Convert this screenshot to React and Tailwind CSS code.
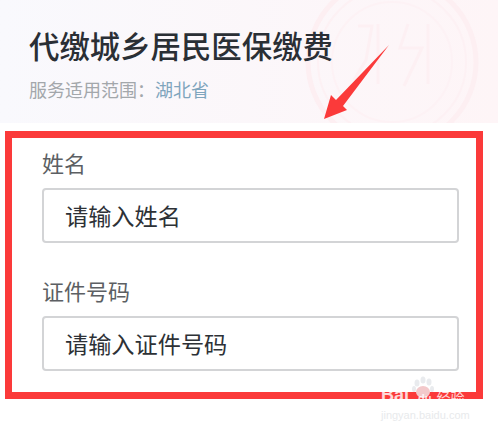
import React from "react";

function Seal() {
    return (
        <svg className="absolute right-0 top-0" width="198" height="123" viewBox="0 0 198 123" fill="none">
            <circle cx="92" cy="62" r="84" stroke="#fdeff2" strokeWidth="5" />
            <circle cx="92" cy="62" r="74" stroke="#fdf1f4" strokeWidth="2" />
            <circle cx="92" cy="62" r="60" stroke="#fdf2f5" strokeWidth="2" />
            <path d="M58 26 L72 26 L66 60 L54 80 M78 24 L78 84 M108 24 L100 48 L122 48 L104 86 M128 24 L128 84" stroke="#fdf0f3" strokeWidth="3" />
        </svg>
    );
}

function Arrow() {
    return (
        <svg className="absolute left-[320px] top-[40px]" width="76" height="84" viewBox="0 0 76 84">
            <path d="M69 5 L16 60 L11 55 L4 79 L27 70 L23 66 Z" fill="#fb3a3a" />
        </svg>
    );
}

function Watermark() {
    return (
        <div className="absolute left-[381px] top-[388px] w-[112px] text-white/80 leading-none pointer-events-none">
            <svg className="absolute left-[30px] top-[-12px]" width="24" height="24" viewBox="0 0 24 24" fill="#e9ebee">
                <ellipse cx="6" cy="7" rx="2.5" ry="3.5" />
                <ellipse cx="12" cy="4" rx="2.5" ry="3.5" />
                <ellipse cx="18" cy="6" rx="2.5" ry="3.5" />
                <ellipse cx="3" cy="13" rx="2" ry="3" />
                <ellipse cx="21" cy="13" rx="2" ry="3" />
                <ellipse cx="12" cy="16" rx="7" ry="6" fill="#f3c9cb" />
            </svg>
            <div className="relative flex items-end h-[16px] text-[18px] font-bold font-['Liberation_Sans',sans-serif]">
                <span>Bai</span>
                <span className="ml-[9px] text-[11px]">du</span>
                <span className="ml-[5px] text-[14px] font-normal font-['Noto_Sans_CJK_SC',sans-serif]">经验</span>
            </div>
            <div className="mt-[6px] text-[11px] text-[#e8eaec] font-['Liberation_Sans',sans-serif]">jingyan.baidu.com</div>
        </div>
    );
}

function Field({ label, placeholder }) {
    return (
        <div className="flex flex-col">
            <label className="text-[22px] leading-[28px] text-[#5c5f63]">{label}</label>
            <div className="mt-[12px] h-[55px] w-[417px] rounded-[4px] border-2 border-[#d3d4d6] bg-white flex items-center pl-[21px] text-[23.2px] text-[#2d3136]">
                {placeholder}
            </div>
        </div>
    );
}

export default function App() {
    return (
        <div className="relative h-[431px] w-[498px] overflow-hidden bg-white font-['Noto_Sans_CJK_SC',sans-serif]">
            {/*header*/}
            <div className="relative h-[123px] bg-gradient-to-r from-[#f9f9fd] to-[#fef5f7] pl-[29px] pt-[25px]">
                <Seal />
                <h1 className="relative text-[30.4px] leading-[40px] font-medium text-[#2a2f35]">代缴城乡居民医保缴费</h1>
                <p className="relative mt-[11px] text-[18px] leading-[26px] text-[#a3a7ab]">
                    服务适用范围：<span className="text-[#7fa5bd]">湖北省</span>
                </p>
            </div>

            {/*form*/}
            <div className="flex flex-col gap-[33px] pl-[42px] pt-[25px]">
                <Field label="姓名" placeholder="请输入姓名" />
                <Field label="证件号码" placeholder="请输入证件号码" />
            </div>

            {/*annotation*/}
            <div className="absolute left-[5px] top-[131px] h-[268px] w-[478px] border-[7px] border-[#fb3a3a]" />
            <Arrow />
            <Watermark />
        </div>
    );
}
